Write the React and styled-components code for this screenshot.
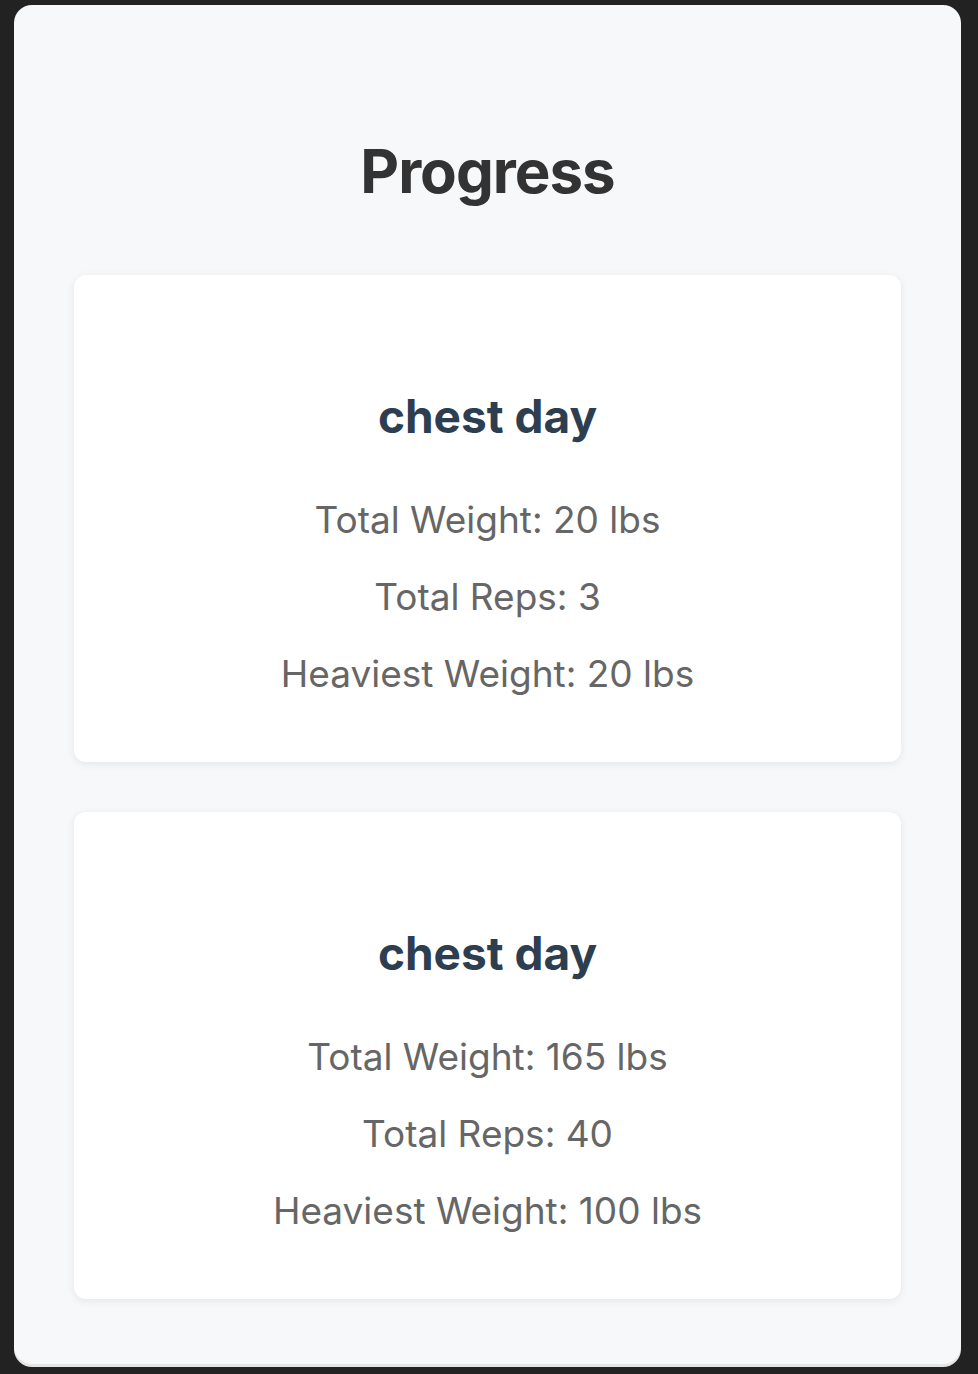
import styled, { createGlobalStyle } from "styled-components";

const GlobalStyle = createGlobalStyle`
	html, body {
		margin: 0;
		padding: 0;
		background: #222222;
	}
	body {
		font-family: Inter, "Noto Sans", "Liberation Sans", sans-serif;
	}
`;

const Page = styled.div`
	padding: 5px 17px 10px 14px;
`;

const Panel = styled.div`
	background: #f7f8fa;
	border-radius: 18px;
	box-shadow: 0 3px 0 #e4e5e7;
	padding: 128px 60px 65px;
	display: flex;
	flex-direction: column;
	align-items: stretch;
`;

const Title = styled.h1`
	margin: 0 0 65px;
	font-size: 60px;
	line-height: 77px;
	letter-spacing: -1px;
	font-weight: 700;
	color: #333333;
	text-align: center;
`;

const List = styled.div`
	display: flex;
	flex-direction: column;
	gap: 50px;
`;

const Card = styled.div`
	background: #ffffff;
	border-radius: 12px;
	box-shadow: 0 2px 8px rgba(0, 0, 0, 0.08);
	padding: 112px 0 50px;
	text-align: center;
`;

const Name = styled.h2`
	margin: 0 0 36px;
	font-size: 46px;
	line-height: 58px;
	font-weight: 700;
	color: #2c3e50;
`;

const Stat = styled.p`
	margin: 0;
	font-size: 37px;
	line-height: 77px;
	color: #666666;
`;

const workouts = [
	{ name: "chest day", total: 20, reps: 3, heaviest: 20 },
	{ name: "chest day", total: 165, reps: 40, heaviest: 100 },
];

const App = () => {
	return (
		<>
			<GlobalStyle />
			<Page>
				<Panel>
					<Title>Progress</Title>
					<List>
						{workouts.map((w, i) => (
							<Card key={i}>
								<Name>{w.name}</Name>
								<Stat>Total Weight: {w.total} lbs</Stat>
								<Stat>Total Reps: {w.reps}</Stat>
								<Stat>Heaviest Weight: {w.heaviest} lbs</Stat>
							</Card>
						))}
					</List>
				</Panel>
			</Page>
		</>
	);
};

export default App;
